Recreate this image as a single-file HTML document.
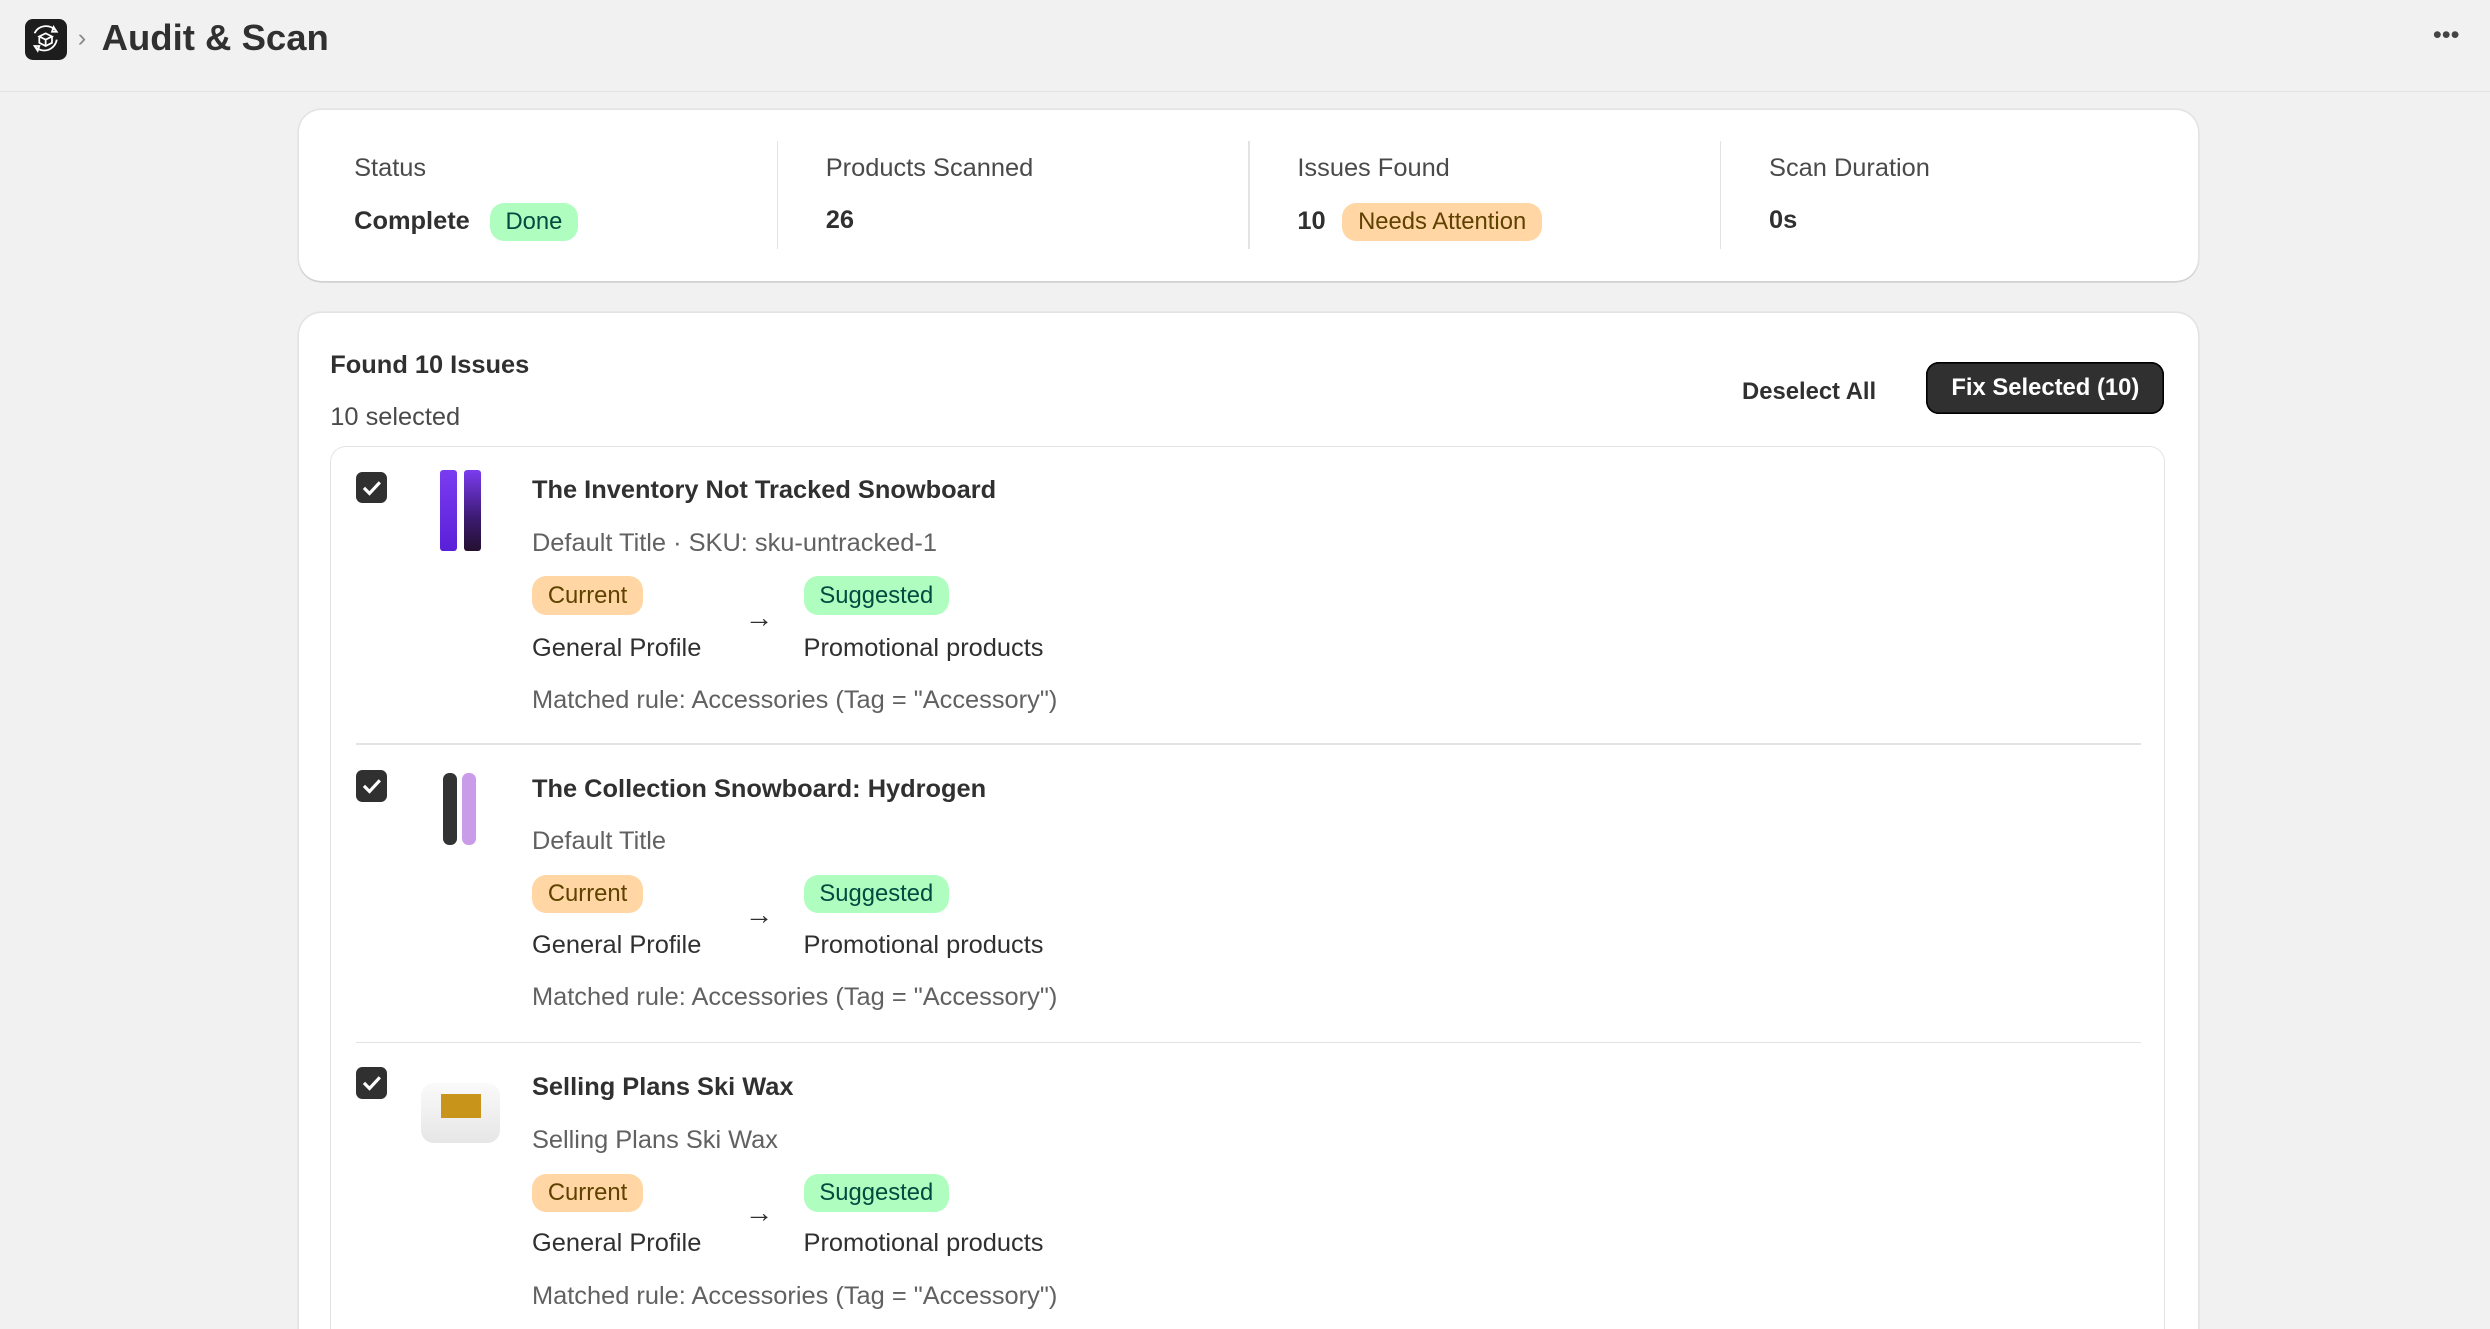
<!DOCTYPE html>
<html><head><meta charset="utf-8"><style>
html{zoom:1.58801;overflow:hidden;height:837px}
body{margin:0;width:1568px;height:837px;background:#f1f1f1;font-family:"Liberation Sans",Arial,sans-serif;color:#303030;position:relative;overflow:hidden}
.a{position:absolute;white-space:nowrap}
.card{position:absolute;background:#fff;border-radius:14px;box-shadow:0 1px 0 #d0d0d0,0 0 0 1px #e3e3e3}
.lbl{font-size:16px;color:#4a4a4a}
.val{font-size:16px;font-weight:bold;color:#303030}
.badge{display:inline-block;padding:2px 10px;border-radius:9px;font-size:15px;line-height:20px}
.cur{background:#ffd6a4;color:#5e4200}
.sug{background:#affebf;color:#014b40}
.chk{width:20px;height:20px;background:#303030;border-radius:4px}
</style></head><body>
<div class="a" style="left:0;top:57px;width:1568px;height:1px;background:#e3e3e3"></div>
<div class="a" style="left:16px;top:12px;width:26px;height:26px;background:#1d1d1d;border-radius:5px">
<svg width="26" height="26" viewBox="0 0 26 26" fill="none" stroke="#fff" stroke-width="1.1"><path d="M6 9a8 8 0 0 1 13-2"/><path d="M20 13a8 8 0 0 1-13 5"/><path d="M18 5l2 3-3 0z"/><path d="M8 20l-2-3 3 0z"/><path d="M9 11l4-2 4 2-4 2z M9 11v4l4 2 4-2v-4 M13 13v4"/></svg></div>
<div class="a" style="left:49px;top:15px;font-size:16px;color:#888">›</div>
<div class="a" style="left:64px;top:11px;font-size:23px;font-weight:bold;color:#303030">Audit &amp; Scan</div>
<div class="a" style="left:1532px;top:13px;font-size:16px;color:#444">•••</div>

<div class="card" style="left:188px;top:69px;width:1196px;height:108px">
<div class="a lbl" style="left:35px;top:28px">Status</div>
<div class="a val" style="left:35px;top:59px">Complete <span class="badge sug" style="font-weight:normal;margin-left:8px;font-size:15px">Done</span></div>
<div class="a" style="left:301px;top:20px;width:1px;height:68px;background:#e3e3e3"></div>
<div class="a lbl" style="left:332px;top:28px">Products Scanned</div>
<div class="a val" style="left:332px;top:61px">26</div>
<div class="a" style="left:598px;top:20px;width:1px;height:68px;background:#e3e3e3"></div>
<div class="a lbl" style="left:629px;top:28px">Issues Found</div>
<div class="a val" style="left:629px;top:59px">10 <span class="badge cur" style="font-weight:normal;margin-left:6px">Needs Attention</span></div>
<div class="a" style="left:895px;top:20px;width:1px;height:68px;background:#e3e3e3"></div>
<div class="a lbl" style="left:926px;top:28px">Scan Duration</div>
<div class="a val" style="left:926px;top:61px">0s</div>
</div>

<div class="card" style="left:188px;top:197px;width:1196px;height:640px;border-radius:14px 14px 0 0">
<div class="a val" style="left:20px;top:24px">Found 10 Issues</div>
<div class="a lbl" style="left:20px;top:57px">10 selected</div>
<div class="a val" style="left:909px;top:41px;font-size:15px">Deselect All</div>
<div class="a" style="left:1025px;top:31px;width:150px;height:33px;background:#303030;border-radius:8px;box-shadow:0 0 0 1px #000 inset;color:#fff;font-size:15px;font-weight:bold;text-align:center;line-height:33px">Fix Selected (10)</div>
<div class="a" style="left:20px;top:84px;width:1154px;height:556px;border:1px solid #e3e3e3;border-bottom:none;border-radius:10px 10px 0 0;background:#fff"></div>
</div>

<div class="a chk" style="left:224px;top:297px"><svg width="20" height="20"><path d="M5 10l3.5 3.5L15 6.5" stroke="#fff" stroke-width="2" fill="none"/></svg></div>
<div class="a" style="left:277px;top:296px;width:11px;height:51px;background:linear-gradient(#7a3cf0,#5a1fd8);border-radius:2px"></div>
<div class="a" style="left:292px;top:296px;width:11px;height:51px;background:linear-gradient(#7b3cf0,#3b1a70 60%,#241030);border-radius:2px"></div>
<div class="a val" style="left:335px;top:300px">The Inventory Not Tracked Snowboard</div>
<div class="a lbl" style="left:335px;top:333px;color:#616161">Default Title · SKU: sku-untracked-1</div>
<div class="a badge cur" style="left:335px;top:363px">Current</div>
<div class="a badge sug" style="left:506px;top:363px">Suggested</div>
<div class="a" style="left:469px;top:379px;font-size:18px">→</div>
<div class="a lbl" style="left:335px;top:399px;color:#303030">General Profile</div>
<div class="a lbl" style="left:506px;top:399px;color:#303030">Promotional products</div>
<div class="a lbl" style="left:335px;top:432px;color:#616161">Matched rule: Accessories (Tag = "Accessory")</div>
<div class="a" style="left:224px;top:468px;width:1124px;height:1px;background:#e3e3e3"></div>

<div class="a chk" style="left:224px;top:485px"><svg width="20" height="20"><path d="M5 10l3.5 3.5L15 6.5" stroke="#fff" stroke-width="2" fill="none"/></svg></div>
<div class="a" style="left:279px;top:487px;width:9px;height:45px;background:#333;border-radius:4px"></div>
<div class="a" style="left:291px;top:487px;width:9px;height:45px;background:#c99be8;border-radius:4px"></div>
<div class="a val" style="left:335px;top:488px">The Collection Snowboard: Hydrogen</div>
<div class="a lbl" style="left:335px;top:521px;color:#616161">Default Title</div>
<div class="a badge cur" style="left:335px;top:551px">Current</div>
<div class="a badge sug" style="left:506px;top:551px">Suggested</div>
<div class="a" style="left:469px;top:566px;font-size:18px">→</div>
<div class="a lbl" style="left:335px;top:586px;color:#303030">General Profile</div>
<div class="a lbl" style="left:506px;top:586px;color:#303030">Promotional products</div>
<div class="a lbl" style="left:335px;top:619px;color:#616161">Matched rule: Accessories (Tag = "Accessory")</div>
<div class="a" style="left:224px;top:656px;width:1124px;height:1px;background:#e3e3e3"></div>

<div class="a chk" style="left:224px;top:672px"><svg width="20" height="20"><path d="M5 10l3.5 3.5L15 6.5" stroke="#fff" stroke-width="2" fill="none"/></svg></div>
<div class="a" style="left:265px;top:682px;width:50px;height:38px;background:linear-gradient(#fafafa,#e6e6e6);border-radius:8px"></div>
<div class="a" style="left:278px;top:689px;width:25px;height:15px;background:#c9941a"></div>
<div class="a val" style="left:335px;top:676px">Selling Plans Ski Wax</div>
<div class="a lbl" style="left:335px;top:709px;color:#616161">Selling Plans Ski Wax</div>
<div class="a badge cur" style="left:335px;top:739px">Current</div>
<div class="a badge sug" style="left:506px;top:739px">Suggested</div>
<div class="a" style="left:469px;top:754px;font-size:18px">→</div>
<div class="a lbl" style="left:335px;top:774px;color:#303030">General Profile</div>
<div class="a lbl" style="left:506px;top:774px;color:#303030">Promotional products</div>
<div class="a lbl" style="left:335px;top:807px;color:#616161">Matched rule: Accessories (Tag = "Accessory")</div>
</body></html>
